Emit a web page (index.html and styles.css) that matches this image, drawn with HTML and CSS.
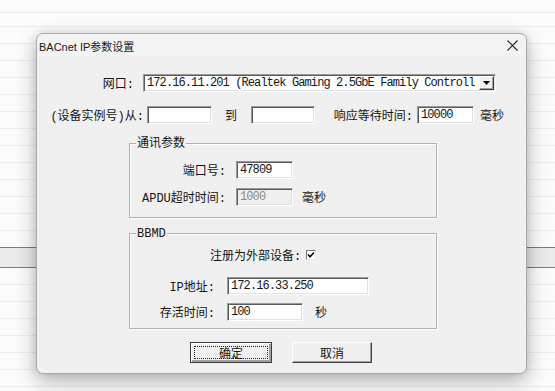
FILE: index.html
```html
<!DOCTYPE html>
<html>
<head>
<meta charset="utf-8">
<link rel="stylesheet" href="styles.css">
</head>
<body>
<div class="desk">
  <div class="bg">
    <div class="bgtop"></div>
    <div class="bgrow"></div><div class="bgrow"></div><div class="bgrow"></div><div class="bgrow"></div>
    <div class="bgrow"></div><div class="bgrow"></div><div class="bgrow"></div><div class="bgrow"></div>
    <div class="bgrow"></div><div class="bgrow"></div><div class="bgrow"></div><div class="bgrow"></div>
    <div class="bgrow"></div><div class="bgrow last"></div>
    <div class="bgband"></div>
    <div class="bgrow"></div><div class="bgrow"></div><div class="bgrow"></div><div class="bgrow"></div>
    <div class="bgrow"></div><div class="bgrow"></div><div class="bgrow"></div>
  </div>

  <div class="dlg">
    <div class="titlebar">
      <span class="ttl">BACnet IP参数设置</span>
      <svg class="close" width="11" height="11" viewBox="0 0 11 11"><path d="M0.5 0.5 L10.5 10.5 M10.5 0.5 L0.5 10.5" stroke="#222" stroke-width="1.1" fill="none"/></svg>
    </div>

    <div class="row r1">
      <span class="lbl l-net">网口:</span>
      <div class="combo">
        <span class="val mono">172.16.11.201 (Realtek Gaming 2.5GbE Family Controll</span>
        <span class="ddbtn"><svg width="7" height="4" viewBox="0 0 7 4"><path d="M0 0 H7 L3.5 4 Z" fill="#000"/></svg></span>
      </div>
    </div>

    <div class="row r2">
      <span class="lbl l-from">(设备实例号)从:</span>
      <div class="field f-from"></div>
      <span class="txt t-to">到</span>
      <div class="field f-to"></div>
      <span class="lbl l-wait">响应等待时间:</span>
      <div class="field f-wait"><span class="mono">10000</span></div>
      <span class="txt t-ms">毫秒</span>
    </div>

    <div class="group g1">
      <span class="legend">通讯参数</span>
      <div class="row">
        <span class="lbl l-g1">端口号:</span>
        <div class="field f-g1"><span class="mono">47809</span></div>
      </div>
      <div class="row r-apdu">
        <span class="lbl l-g1">APDU超时时间:</span>
        <div class="field f-g1 disabled"><span class="mono">1000</span></div>
        <span class="txt t-ms2">毫秒</span>
      </div>
    </div>

    <div class="group g2">
      <span class="legend">BBMD</span>
      <div class="row r-chk">
        <span class="txt">注册为外部设备:</span>
        <span class="chk"><svg width="8" height="8" viewBox="0 0 8 8"><path d="M1 3.6 L3 5.8 L7 1.4" stroke="#000" stroke-width="1.5" fill="none"/></svg></span>
      </div>
      <div class="row r-ip">
        <span class="lbl l-g2">IP地址:</span>
        <div class="field f-ip"><span class="mono">172.16.33.250</span></div>
      </div>
      <div class="row r-live">
        <span class="lbl l-g2">存活时间:</span>
        <div class="field f-live"><span class="mono">100</span></div>
        <span class="txt t-sec">秒</span>
      </div>
    </div>

    <div class="btns">
      <div class="btn def"><span class="focus">确定</span></div>
      <div class="btn cancel"><span>取消</span></div>
    </div>
  </div>
</div>
</body>
</html>
```

FILE: styles.css
```css
html, body {
  margin: 0;
  padding: 0;
}
body {
  width: 555px;
  height: 391px;
  overflow: hidden;
  background: #fcfcfc;
  font-family: "Liberation Mono", "Noto Sans CJK SC", monospace;
  font-size: 12px;
  color: #151515;
}
.desk {
  position: relative;
  width: 555px;
  height: 391px;
  overflow: hidden;
}

/* background application */
.bg {
  display: flex;
  flex-direction: column;
}
.bgtop {
  height: 13px;
  box-sizing: border-box;
  border-bottom: 1px solid #ebebeb;
}
.bgrow {
  height: 17px;
  box-sizing: border-box;
  border-bottom: 1px solid #eeeeee;
}
.bgtop + .bgrow {
  height: 14px;
}
.bgrow.last {
  border-bottom: 1px solid #7c7c7c;
}
.bgband {
  height: 20px;
  box-sizing: border-box;
  background: #ebebeb;
  border-bottom: 1px solid #7c7c7c;
}

/* dialog window */
.dlg {
  position: absolute;
  left: 36px;
  top: 33px;
  width: 491px;
  box-sizing: border-box;
  background: #f0f0f0;
  border: 1px solid #a9a9a9;
  border-radius: 7px;
  box-shadow: 0 8px 22px rgba(0, 0, 0, 0.28), 0 0 8px rgba(0, 0, 0, 0.12);
  padding-bottom: 10px;
}
.titlebar {
  height: 23px;
  display: flex;
  align-items: center;
  justify-content: space-between;
  padding: 0 8px 0 2px;
  background: #f3f3f3;
  border-radius: 7px 7px 0 0;
}
.ttl {
  font-family: "Liberation Sans", "Noto Sans CJK SC", sans-serif;
  font-size: 11px;
  color: #1a1a1a;
}
.close {
  display: block;
}

.row {
  display: flex;
  align-items: center;
  height: 18px;
}
.lbl {
  text-align: right;
  white-space: nowrap;
  flex: none;
}
.txt {
  white-space: nowrap;
  flex: none;
}
.mono {
  font-family: "Liberation Mono", monospace;
  letter-spacing: -0.9px;
  white-space: nowrap;
}

/* sunken edit fields */
.field, .combo {
  box-sizing: border-box;
  height: 18px;
  background: #fff;
  border-top: 1px solid #9a9a9a;
  border-left: 1px solid #9a9a9a;
  border-right: 1px solid #fff;
  border-bottom: 1px solid #fff;
  box-shadow: inset 1px 1px 0 #5a5a5a, inset -1px -1px 0 #e2e2e2;
  display: flex;
  align-items: center;
  padding-left: 3px;
  flex: none;
  overflow: hidden;
}
.field.disabled {
  background: #f0f0f0;
  color: #8c8c8c;
}

.r1 {
  margin-top: 17px;
}
.l-net {
  width: 97px;
}
.combo {
  margin-left: 9px;
  width: 353px;
  padding-right: 1px;
  justify-content: space-between;
}
.combo .val {
  overflow: hidden;
  flex: 1;
  padding-left: 0;
}
.ddbtn {
  flex: none;
  width: 15px;
  height: 14px;
  box-sizing: border-box;
  background: #f0f0f0;
  border-top: 1px solid #fff;
  border-left: 1px solid #fff;
  border-right: 1px solid #404040;
  border-bottom: 1px solid #404040;
  box-shadow: inset -1px -1px 0 #a0a0a0;
  display: flex;
  align-items: center;
  justify-content: center;
}
.ddbtn svg {
  display: block;
}

.r2 {
  margin-top: 14px;
}
.l-from {
  width: 107px;
}
.f-from {
  margin-left: 3px;
  width: 65px;
}
.t-to {
  margin-left: 13px;
  width: 12px;
}
.f-to {
  margin-left: 14px;
  width: 64px;
}
.l-wait {
  width: 98px;
}
.f-wait {
  margin-left: 4px;
  width: 57px;
}
.t-ms {
  margin-left: 6px;
}

/* group boxes */
.group {
  position: relative;
  margin-left: 92px;
  width: 308px;
  box-sizing: border-box;
  border: 1px solid #b1b1b1;
  box-shadow: inset 1px 1px 0 #fff, 1px 1px 0 #fff;
}
.legend {
  position: absolute;
  left: 6px;
  top: -7px;
  line-height: 14px;
  padding: 0 1px;
  background: #f0f0f0;
  font-family: "Liberation Mono", "Noto Sans CJK SC", monospace;
}
.g1 {
  margin-top: 19px;
  padding: 17px 0 11px 0;
}
.l-g1 {
  width: 96px;
}
.f-g1 {
  margin-left: 10px;
  width: 57px;
}
.r-apdu {
  margin-top: 9px;
}
.t-ms2 {
  margin-left: 9px;
}

.g2 {
  margin-top: 15px;
  padding: 12px 0 7px 0;
}
.r-chk {
  padding-left: 80px;
}
.chk {
  margin-left: 5px;
  width: 10px;
  height: 10px;
  box-sizing: border-box;
  background: #fff;
  border-top: 1px solid #7a7a7a;
  border-left: 1px solid #7a7a7a;
  border-right: 1px solid #e8e8e8;
  border-bottom: 1px solid #e8e8e8;
  display: flex;
  align-items: center;
  justify-content: center;
}
.chk svg {
  display: block;
}
.r-ip {
  margin-top: 13px;
}
.l-g2 {
  width: 85px;
}
.f-ip {
  margin-left: 12px;
  width: 142px;
}
.r-live {
  margin-top: 8px;
}
.f-live {
  margin-left: 12px;
  width: 76px;
}
.t-sec {
  margin-left: 12px;
}

/* buttons */
.btns {
  display: flex;
  margin-top: 13px;
  padding-left: 153px;
}
.btn {
  box-sizing: border-box;
  height: 21px;
  background: #f0f0f0;
  border-top: 1px solid #fff;
  border-left: 1px solid #fff;
  border-right: 1px solid #404040;
  border-bottom: 1px solid #404040;
  box-shadow: inset -1px -1px 0 #a0a0a0;
  display: flex;
  align-items: center;
  justify-content: center;
}
.btn.def {
  width: 82px;
  border: 1px solid #3c3c3c;
  box-shadow: inset 1px 1px 0 #fff, inset -2px -2px 0 #a0a0a0;
  padding: 3px;
}
.btn .focus {
  flex: 1;
  align-self: stretch;
  display: flex;
  align-items: center;
  justify-content: center;
  outline: 1px dotted #222;
  outline-offset: -1px;
}
.btn.cancel {
  margin-left: 20px;
  width: 80px;
}
```
